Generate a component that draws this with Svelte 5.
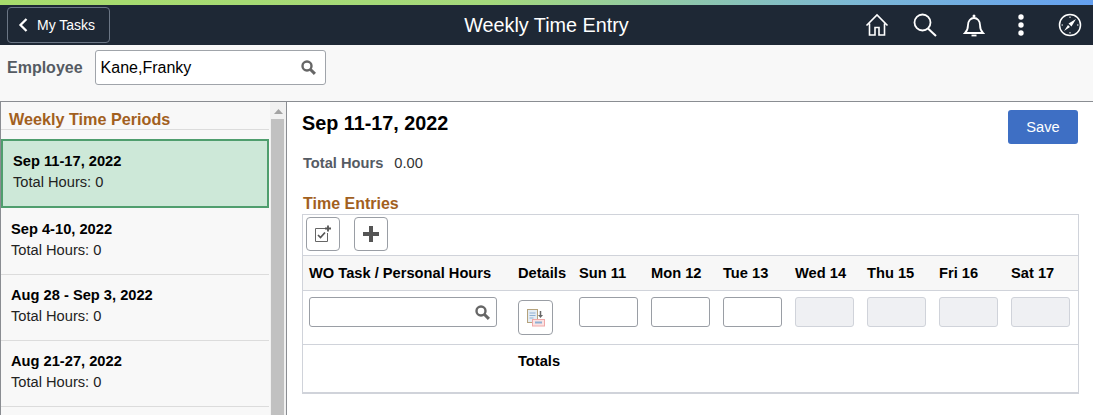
<script lang="ts">
  const periods = [
    { label: 'Sep 11-17, 2022', hours: 0, active: true },
    { label: 'Sep 4-10, 2022', hours: 0 },
    { label: 'Aug 28 - Sep 3, 2022', hours: 0 },
    { label: 'Aug 21-27, 2022', hours: 0 }
  ];

  const days = [
    { label: 'Sun 11', open: true },
    { label: 'Mon 12', open: true },
    { label: 'Tue 13', open: true },
    { label: 'Wed 14', open: false },
    { label: 'Thu 15', open: false },
    { label: 'Fri 16', open: false },
    { label: 'Sat 17', open: false }
  ];
</script>

<div class="strip"></div>
<header class="banner">
  <button class="back">
    <svg width="10" height="14" viewBox="0 0 10 14"><path d="M8.500 1 2.500 7l6 6" fill="none" stroke="#fff" stroke-width="2.300" /></svg>
    <span>My Tasks</span>
  </button>
  <h1>Weekly Time Entry</h1>
  <nav class="actions">
    <svg class="home" width="24" height="24" viewBox="0 0 24 24" fill="none" stroke="#fff" stroke-width="1.600">
      <path d="M1.500 12.500 12 2l10.500 10.500M4.500 10.500V22h5.500v-7.500h4V22h5.500V10.500" />
    </svg>
    <svg class="find" width="24" height="24" viewBox="0 0 24 24" fill="none" stroke="#fff" stroke-width="1.800">
      <circle cx="9.500" cy="9.500" r="8" /><path d="M15 15.500 23 23" stroke-width="2" />
    </svg>
    <svg class="bell" width="22" height="24" viewBox="0 0 22 24" fill="none" stroke="#fff" stroke-width="1.800">
      <path d="M2 20c2-2 3-4 3-8 0-4 2.500-7 6-7s6 3 6 7c0 4 1 6 3 8z" /><circle cx="11" cy="3" r="1.500" fill="#fff" stroke="none" /><path d="M8.500 22.500h5" />
    </svg>
    <svg class="dots" width="6" height="22" viewBox="0 0 6 22" fill="#fff">
      <circle cx="3" cy="3" r="2.700" /><circle cx="3" cy="11" r="2.700" /><circle cx="3" cy="19" r="2.700" />
    </svg>
    <svg class="compass" width="24" height="24" viewBox="0 0 24 24" fill="none" stroke="#fff" stroke-width="1.500">
      <circle cx="12" cy="12" r="10.500" />
      <path d="M18 6 13.500 13.500 10.500 10.500zM6 18l4-6 2 2z" fill="#fff" stroke="none" />
      <path d="M12 3.500v1.500M12 19v1.500M3.500 12H5M19 12h1.500" stroke-width="1" />
    </svg>
  </nav>
</header>

<div class="employee">
  <span class="employee-label">Employee</span>
  <div class="prompt">
    <span>Kane,Franky</span>
    <svg width="15" height="15" viewBox="0 0 15 15" fill="none" stroke="#666" stroke-width="2.400"><circle cx="6" cy="6" r="4.500" /><path d="m9.500 9.500 4.400 4.400" stroke-width="3" /></svg>
  </div>
</div>

<main class="split">
  <aside class="side">
    <div class="side-list">
      <h2 class="side-title">Weekly Time Periods</h2>
      {#each periods as p}
        <div class="period" class:active={p.active}>
          <div class="period-name">{p.label}</div>
          <div class="period-hours">Total Hours: {p.hours}</div>
        </div>
      {/each}
    </div>
    <div class="scrollbar">
      <svg width="9" height="5" viewBox="0 0 9 5"><path d="M4.500 0 9 5H0z" fill="#a3a3a3" /></svg>
      <div class="thumb"></div>
    </div>
  </aside>

  <section class="content">
    <div class="content-top">
      <h2 class="week">Sep 11-17, 2022</h2>
      <button class="save">Save</button>
    </div>
    <div class="total">
      <span class="total-label">Total Hours</span>
      <span>0.00</span>
    </div>
    <h3 class="entries-title">Time Entries</h3>
    <div class="table">
      <div class="toolbar">
        <button class="tool" aria-label="Add from schedule">
          <svg width="18" height="18" viewBox="0 0 18 18" fill="none">
            <path d="M11 3.500H1.500v13h12V8" stroke="#666" stroke-width="1" />
            <path d="m4 10 2.500 2.500L11 7.500" stroke="#555" stroke-width="1.700" />
            <path d="M14 0.500v6M11 3.500h6" stroke="#555" stroke-width="1.800" />
          </svg>
        </button>
        <button class="tool" aria-label="Add row">
          <svg width="16" height="16" viewBox="0 0 16 16"><path d="M8 0v16M0 8h16" stroke="#555" stroke-width="4" /></svg>
        </button>
      </div>
      <div class="row head">
        <div class="task-head">WO Task / Personal Hours</div>
        <div>Details</div>
        {#each days as d}
          <div>{d.label}</div>
        {/each}
      </div>
      <div class="row entry">
        <div class="task-cell">
          <div class="task-input">
            <svg width="15" height="15" viewBox="0 0 15 15" fill="none" stroke="#666" stroke-width="2.400"><circle cx="6" cy="6" r="4.500" /><path d="m9.500 9.500 4.400 4.400" stroke-width="3" /></svg>
          </div>
        </div>
        <div class="details-cell">
          <button class="details" aria-label="Details">
            <svg width="18" height="18" viewBox="0 0 18 18">
              <rect x="0.500" y="0.500" width="10" height="13" fill="#e4ecf4" stroke="#b5a27c" />
              <path d="M2.500 4h6M2.500 6.500h6M2.500 9h4" stroke="#8fb0d4" stroke-width="1.200" />
              <path d="M13.500 2v5" stroke="#666" stroke-width="1.500" />
              <path d="M11 6h5l-2.500 3z" fill="#666" />
              <rect x="5.500" y="10.500" width="12" height="6.500" fill="#fbe3e3" stroke="#f0a8a8" />
              <rect x="8" y="12.500" width="7" height="2" fill="#8fb0d4" />
            </svg>
          </button>
        </div>
        {#each days as d}
          <div class="day-cell">
            <div class="day-input" class:closed={!d.open}></div>
          </div>
        {/each}
      </div>
      <div class="row totals">
        <div></div>
        <div>Totals</div>
      </div>
    </div>
  </section>
</main>

<style>
  :global(body) {
    font-family: "Liberation Sans", Arial, sans-serif;
    background: #fff;
    color: #000;
    overflow: hidden;
  }

  .strip {
    height: 5px;
    background: linear-gradient(90deg, #a8dc6c 0%, #a4d87c 45%, #7cb8d4 78%, #64a0f0 100%);
  }

  .banner {
    display: flex;
    align-items: center;
    justify-content: space-between;
    position: relative;
    height: 40px;
    padding: 0 11px 0 7px;
    background: #1e2835;
    color: #fff;
  }

  .back {
    display: flex;
    align-items: center;
    gap: 9px;
    width: 103px;
    height: 36px;
    padding: 0 0 0 10px;
    background: transparent;
    border: 1px solid #6b7685;
    border-radius: 4px;
    color: #fff;
    font: 14px "Liberation Sans", Arial, sans-serif;
  }

  .banner h1 {
    position: absolute;
    left: 0;
    right: 0;
    margin: 0;
    text-align: center;
    font-size: 19.800px;
    font-weight: 400;
    pointer-events: none;
  }

  .actions {
    display: flex;
    align-items: center;
  }

  .home { margin-right: 24px; }
  .find { margin-right: 26px; }
  .bell { margin-right: 33px; }
  .dots { margin-right: 34px; }

  .employee {
    display: flex;
    align-items: center;
    gap: 12px;
    height: 57px;
    padding: 0 0 11px 7px;
    box-sizing: border-box;
    background: #f8f8f8;
    border-bottom: 1px solid #8a8d92;
  }

  .employee-label {
    font-size: 16px;
    font-weight: 700;
    color: #555b63;
  }

  .prompt {
    display: flex;
    align-items: center;
    justify-content: space-between;
    box-sizing: border-box;
    width: 231px;
    height: 35px;
    padding: 0 9px 0 5px;
    background: #fff;
    border: 1px solid #a0a4aa;
    border-radius: 3px;
    font-size: 16px;
  }

  .split {
    display: flex;
    height: 314px;
    overflow: hidden;
  }

  .side {
    display: flex;
    flex: none;
    box-sizing: border-box;
    width: 287px;
    background: #f8f8f8;
    border-left: 1px solid #8a8d92;
    border-right: 1px solid #8a8d92;
  }

  .side-list {
    flex: 1;
    min-width: 0;
  }

  .side-title {
    margin: 0;
    height: 28px;
    padding: 8px 0 0 8px;
    box-sizing: border-box;
    font-size: 16.200px;
    line-height: 19px;
    font-weight: 700;
    color: #a2601e;
    border-bottom: 1px solid #dcdcdc;
  }

  .period {
    box-sizing: border-box;
    height: 66px;
    padding: 12px 0 0 10px;
    border-bottom: 1px solid #dcdcdc;
  }

  .period.active {
    height: 69px;
    margin-top: 9px;
    margin-bottom: 1px;
    padding: 12px 0 0 10px;
    background: #cde8d8;
    border: 2px solid #4f9e6e;
  }

  .period-name {
    font-size: 14.670px;
    line-height: 17px;
    font-weight: 700;
  }

  .period-hours {
    margin-top: 4px;
    font-size: 14.670px;
    line-height: 17px;
    color: #222;
  }

  .scrollbar {
    display: flex;
    flex-direction: column;
    align-items: center;
    flex: none;
    width: 16px;
    margin-left: 1px;
    padding-top: 7px;
    box-sizing: border-box;
    background: #f1f1f1;
  }

  .thumb {
    flex: 1;
    align-self: flex-start;
    width: 13px;
    margin: 5px 0 0 1px;
    background: #c1c1c1;
  }

  .content {
    flex: 1;
    min-width: 0;
    padding: 8px 14px 0 15px;
  }

  .content-top {
    display: flex;
    justify-content: space-between;
    align-items: flex-start;
    height: 44px;
  }

  .week {
    margin: 2px 0 0;
    font-size: 19.800px;
    line-height: 22px;
    font-weight: 700;
  }

  .save {
    width: 70px;
    height: 34px;
    margin-right: 1px;
    background: #3e6fc4;
    border: none;
    border-radius: 3px;
    color: #fff;
    font: 14.670px "Liberation Sans", Arial, sans-serif;
  }

  .total {
    display: flex;
    gap: 11px;
    font-size: 14.670px;
    line-height: 17px;
    margin-top: 1px;
    padding-left: 1px;
    color: #333;
  }

  .total-label {
    font-weight: 700;
    color: #555b63;
  }

  .entries-title {
    margin: 22px 0 0;
    padding-left: 1px;
    font-size: 16px;
    line-height: 19px;
    font-weight: 700;
    color: #a2601e;
  }

  .table {
    box-sizing: border-box;
    width: 777px;
    height: 180px;
    margin-top: 1px;
    border: 1px solid #d0d3da;
    border-bottom-width: 2px;
  }

  .toolbar {
    display: flex;
    gap: 14px;
    height: 41px;
    padding: 2px 0 0 3px;
    box-sizing: border-box;
    border-bottom: 1px solid #d0d3da;
  }

  .tool,
  .details {
    display: flex;
    align-items: center;
    justify-content: center;
    box-sizing: border-box;
    width: 34px;
    height: 34px;
    padding: 0;
    background: #fff;
    border: 1px solid #9a9ea5;
    border-radius: 4px;
  }

  .details {
    width: 35px;
    height: 35px;
  }

  .row {
    display: grid;
    grid-template-columns: 215px 61px repeat(6, 72px) 1fr;
  }

  .head {
    align-items: center;
    height: 35px;
    box-sizing: border-box;
    background: #f7f7f7;
    border-bottom: 1px solid #d0d3da;
    font-size: 14.670px;
    font-weight: 700;
  }

  .task-head {
    padding-left: 6px;
  }

  .entry {
    height: 54px;
    box-sizing: border-box;
    border-bottom: 1px solid #d0d3da;
  }

  .task-cell {
    padding: 6px 0 0 6px;
  }

  .task-input {
    display: flex;
    align-items: center;
    justify-content: flex-end;
    box-sizing: border-box;
    width: 188px;
    height: 30px;
    padding-right: 6px;
    background: #fff;
    border: 1px solid #9a9ea5;
    border-radius: 3px;
  }

  .details-cell {
    padding-top: 9px;
  }

  .day-cell {
    padding-top: 6px;
  }

  .day-input {
    box-sizing: border-box;
    width: 59px;
    height: 30px;
    background: #fff;
    border: 1px solid #9a9ea5;
    border-radius: 3px;
  }

  .day-input.closed {
    background: #eff0f3;
    border-color: #d0d3da;
  }

  .totals {
    padding-top: 8px;
    font-size: 14.670px;
    line-height: 17px;
    font-weight: 700;
  }
</style>
